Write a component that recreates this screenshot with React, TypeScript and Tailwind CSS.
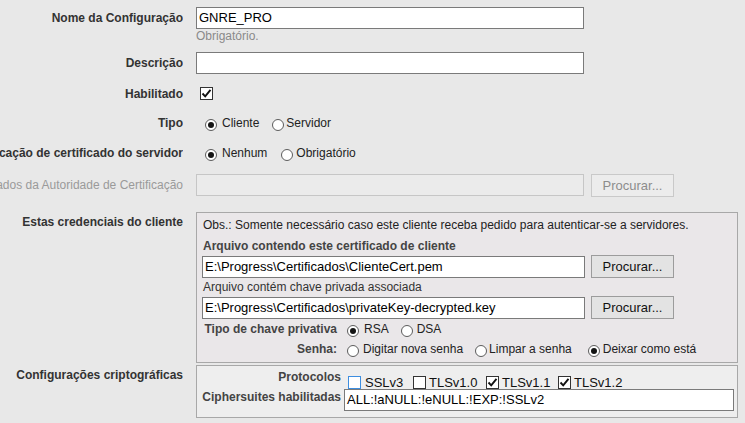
import type { ReactNode } from 'react'

const font = { fontFamily: '"Liberation Sans", Arial, sans-serif' }

function Radio({ checked, className = '' }: { checked?: boolean; className?: string }) {
  return (
    <span className={'w-[12px] h-[12px] rounded-full border border-[#5c5c5c] bg-white flex items-center justify-center shrink-0 translate-y-[2px] ' + className}>
      {checked && <span className="w-[6px] h-[6px] rounded-full bg-[#141414]" />}
    </span>
  )
}

function Check({ checked, focus, className = '' }: { checked?: boolean; focus?: boolean; className?: string }) {
  return (
    <span
      className={
        'w-[13px] h-[13px] border bg-white flex items-center justify-center shrink-0 ' +
        (focus ? 'border-[#3d8ee0] ' : 'border-[#333333] ') +
        className
      }
    >
      {checked && (
        <svg width="11" height="11" viewBox="0 0 11 11">
          <path d="M1.5 5.5 L4.2 8.3 L9.5 1.8" fill="none" stroke="#111" strokeWidth="1.9" />
        </svg>
      )}
    </span>
  )
}

function Row({ label, dim, className = '', children }: { label: string; dim?: boolean; className?: string; children: ReactNode }) {
  return (
    <div className={'flex items-center ' + className}>
      <div className="w-[183px] shrink-0 flex justify-end overflow-hidden whitespace-nowrap">
        <span className={'text-[12px] ' + (dim ? 'text-[#9a9a9a]' : 'font-bold text-[#333333]')}>{label}</span>
      </div>
      <div className="ml-[13px] flex items-center">{children}</div>
    </div>
  )
}

function Button({ disabled }: { disabled?: boolean }) {
  return (
    <button
      disabled={disabled}
      className={
        'h-[23px] w-[83px] text-[13px] border ' +
        (disabled
          ? 'bg-[#ececec] border-[#c9c9c9] text-[#8c8c8c]'
          : 'bg-[#e3e3e3] border-[#9c9c9c] text-[#111111]')
      }
    >
      Procurar...
    </button>
  )
}

function TextBox({ value, width, disabled }: { value?: string; width: string; disabled?: boolean }) {
  return (
    <div
      className={
        'h-[22px] px-[2px] flex items-center text-[13px] text-black ' +
        width +
        (disabled ? ' bg-[#ebebeb] border border-[#c6c6c6]' : ' bg-white border border-[#7a7a7a]')
      }
    >
      {value}
    </div>
  )
}

export default function App() {
  return (
    <div className="w-[745px] h-[423px] overflow-hidden bg-[#e8e8e8]" style={font}>
      <Row label="Nome da Configuração" className="h-[22px] mt-[7px]">
        <TextBox value="GNRE_PRO" width="w-[388px]" />
      </Row>
      <div className="pl-[196px] text-[12px] leading-[14px] text-[#8a8a8a]">Obrigatório.</div>

      <Row label="Descrição" className="h-[22px] mt-[9px]">
        <TextBox width="w-[388px]" />
      </Row>

      <Row label="Habilitado" className="h-[22px] mt-[9px]">
        <Check checked className="ml-[4px] -translate-y-[1px]" />
      </Row>

      <Row label="Tipo" className="h-[22px] mt-[7px]">
        <Radio checked className="ml-[9px]" />
        <span className="ml-[5px] text-[12px] text-[#222222]">Cliente</span>
        <Radio className="ml-[13px]" />
        <span className="ml-[2px] text-[12px] text-[#222222]">Servidor</span>
      </Row>

      <Row label="Verificação de certificado do servidor" className="h-[22px] mt-[8px]">
        <Radio checked className="ml-[9px]" />
        <span className="ml-[5px] text-[12px] text-[#222222]">Nenhum</span>
        <Radio className="ml-[14px]" />
        <span className="ml-[3px] text-[12px] text-[#222222]">Obrigatório</span>
      </Row>

      <Row label="Certificados da Autoridade de Certificação" dim className="h-[22px] mt-[10px]">
        <TextBox disabled width="w-[388px]" />
        <span className="ml-[7px]">
          <Button disabled />
        </span>
      </Row>

      <div className="flex items-start mt-[16px]">
        <div className="w-[183px] shrink-0 flex justify-end pt-[1px]">
          <span className="text-[12px] font-bold text-[#333333]">Estas credenciais do cliente</span>
        </div>
        <div className="ml-[13px] w-[542px] h-[151px] border border-[#a8a8a8] bg-[#eae7e9] pl-[5px] pt-[5px] text-[12px] text-[#222222]">
          <div className="leading-[14px] pl-[1px]">
            Obs.: Somente necessário caso este cliente receba pedido para autenticar-se a servidores.
          </div>
          <div className="mt-[7px] leading-[14px] pl-[1px] font-bold text-[#444444]">
            Arquivo contendo este certificado de cliente
          </div>
          <div className="mt-[2px] flex items-center">
            <TextBox value="E:\Progress\Certificados\ClienteCert.pem" width="w-[383px]" />
            <span className="ml-[6px]">
              <Button />
            </span>
          </div>
          <div className="mt-[2px] leading-[14px] pl-[1px] text-[#333333]">Arquivo contém chave privada associada</div>
          <div className="mt-[2px] flex items-center">
            <TextBox value="E:\Progress\Certificados\privateKey-decrypted.key" width="w-[383px]" />
            <span className="ml-[6px]">
              <Button />
            </span>
          </div>
          <div className="mt-[2px] h-[16px] flex items-center">
            <span className="w-[135px] text-right font-bold text-[#444444] whitespace-nowrap">Tipo de chave privativa</span>
            <Radio checked className="ml-[10px]" />
            <span className="ml-[5px]">RSA</span>
            <Radio className="ml-[12px]" />
            <span className="ml-[4px]">DSA</span>
          </div>
          <div className="mt-[4px] h-[16px] flex items-center">
            <span className="w-[135px] text-right font-bold text-[#444444]">Senha:</span>
            <Radio className="ml-[10px]" />
            <span className="ml-[4px]">Digitar nova senha</span>
            <Radio className="ml-[12px]" />
            <span className="ml-[2px]">Limpar a senha</span>
            <Radio checked className="ml-[16px]" />
            <span className="ml-[3px]">Deixar como está</span>
          </div>
        </div>
      </div>

      <div className="flex items-start mt-[2px]">
        <div className="w-[183px] shrink-0 flex justify-end pt-[1px]">
          <span className="text-[12px] font-bold text-[#333333]">Configurações criptográficas</span>
        </div>
        <div className="ml-[13px] w-[542px] h-[53px] border border-[#a8a8a8] bg-[#eeeeee] pl-[5px] pt-[4px] text-[12px]">
          <div className="h-[16px] flex items-start">
            <span className="w-[139px] text-right font-bold text-[#444444] leading-[14px]">Protocolos</span>
            <div className="ml-[7px] flex items-center text-[13px] text-[#111111] mt-[3px]">
              <div className="w-[65px] flex items-center">
                <Check focus />
                <span className="ml-[4px]">SSLv3</span>
              </div>
              <div className="w-[73px] flex items-center">
                <Check />
                <span className="ml-[3px]">TLSv1.0</span>
              </div>
              <div className="w-[72px] flex items-center">
                <Check checked />
                <span className="ml-[3px]">TLSv1.1</span>
              </div>
              <div className="flex items-center">
                <Check checked />
                <span className="ml-[3px]">TLSv1.2</span>
              </div>
            </div>
          </div>
          <div className="mt-[3px] flex items-center">
            <span className="w-[139px] text-right font-bold text-[#444444] whitespace-nowrap -translate-y-[3px]">Ciphersuites habilitadas</span>
            <div className="ml-[3px]">
              <TextBox value="ALL:!aNULL:!eNULL:!EXP:!SSLv2" width="w-[390px]" />
            </div>
          </div>
        </div>
      </div>
    </div>
  )
}
